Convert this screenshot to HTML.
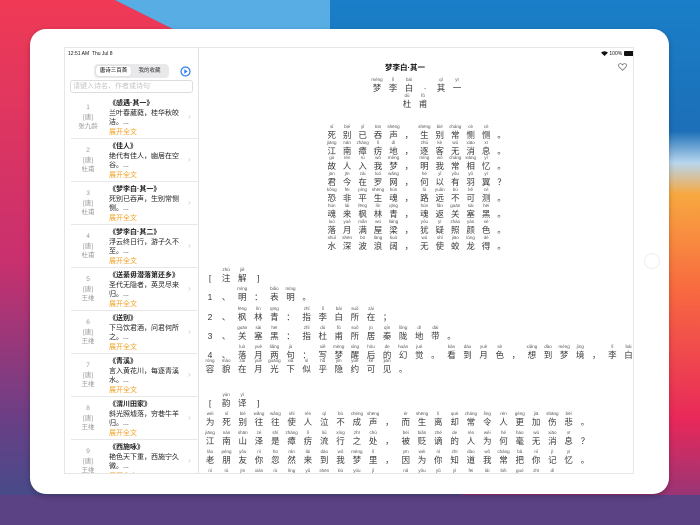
<!DOCTYPE html>
<html><head><meta charset="utf-8"><style>
*{margin:0;padding:0;box-sizing:border-box}
body{width:700px;height:525px;overflow:hidden;position:relative;font-family:"Liberation Sans","Noto Sans CJK SC",sans-serif;background:#6a3f86}
.bg{position:absolute;left:0;top:0}
.frame{position:absolute;left:30px;top:29px;width:639px;height:465px;background:#fff;border-radius:16px;box-shadow:0 2px 6px rgba(0,0,0,.25)}
.home{position:absolute;left:644px;top:253px;width:16px;height:16px;border-radius:50%;border:1px solid #eee}
.screen{position:absolute;left:64px;top:47px;width:570px;height:427px;background:#fff;border:1px solid #e6e6e6;overflow:hidden}
.a{position:absolute;white-space:nowrap}
.side{position:absolute;left:0;top:0;width:134px;height:427px;border-right:1px solid #e2e2e2}
.st{font-size:5px;color:#111}
.seg{position:absolute;left:29px;top:16px;width:75px;height:14px;background:#e9e9eb;border-radius:4px;font-size:5.5px}
.seg span{position:absolute;top:2px;height:10px;line-height:10px;text-align:center}
.search{position:absolute;left:5px;top:32px;width:123px;height:13px;border:1px solid #ddd;border-radius:3px;font-size:7px;color:#c4c4c4;line-height:12px;padding-left:2px}
.it{position:absolute;left:6px;width:128px;height:43px;border-bottom:1px solid #e8e8e8}
.it .n{position:absolute;left:0;width:34px;text-align:center;font-size:6.5px;color:#9a9a9a;line-height:9.5px;top:7px}
.it .t{position:absolute;left:38px;top:2px;font-size:7px;font-weight:bold;color:#222}
.it .x{position:absolute;left:38px;top:13px;width:76px;font-size:7px;line-height:9px;color:#222;white-space:normal}
.it .o{position:absolute;left:38px;top:31px;font-size:7px;color:#f0a020}
.it .c{position:absolute;left:117px;top:16px;font-size:8px;color:#c8c8c8}
.r{position:absolute;white-space:nowrap;font-size:0}
.r i{display:inline-block;font-style:normal;text-align:center;vertical-align:top;font-size:8.5px;line-height:11px;color:#3a3a3a}
.r i b{display:block;font-size:4.5px;line-height:6px;font-weight:normal;color:#555;height:6px}
.p i{width:15.45px}
.n1 i{width:16.1px}
.tr i{width:16.3px}
.s i{width:16px}
</style></head><body>
<svg class="bg" width="700" height="525" viewBox="0 0 700 525">
<defs>
<linearGradient id="g1" x1="0" y1="0" x2="0" y2="1"><stop offset="0" stop-color="#f03a55"/><stop offset=".5" stop-color="#c8306e"/><stop offset=".8" stop-color="#6a3f86"/><stop offset="1" stop-color="#3a4f8a"/></linearGradient>
<linearGradient id="g2" x1="0" y1="0" x2="0" y2="1"><stop offset="0" stop-color="#1a7fc8"/><stop offset=".25" stop-color="#1c6fb8"/><stop offset=".31" stop-color="#b8d6ee"/><stop offset=".37" stop-color="#f8a840"/><stop offset=".55" stop-color="#f86a40"/><stop offset=".8" stop-color="#e8285a"/><stop offset="1" stop-color="#7a3a80"/></linearGradient>
</defs>
<rect width="700" height="525" fill="url(#g1)"/>
<polygon points="115,0 700,0 700,525 480,525 175,30" fill="url(#g2)"/>
<rect x="0" y="495" width="700" height="30" fill="#5a4284"/>
<polygon points="115,0 330,0 330,30 175,30" fill="#58aee4"/>
</svg>
<div class="frame"></div>
<div class="home"></div>
<div class="screen">
 <div class="side">
  <div class="a st" style="left:3px;top:3px">12:51 AM&nbsp;&nbsp;Thu Jul 8</div>
  <div class="seg"><span style="left:2px;width:35px;background:#fff;border-radius:3px;box-shadow:0 0 1px rgba(0,0,0,.2)">唐诗三百首</span><span style="left:37px;width:37px;color:#333">我的收藏</span></div>
  <svg class="a" style="left:115px;top:18px" width="11" height="11" viewBox="0 0 11 11"><circle cx="5.5" cy="5.5" r="4.5" fill="none" stroke="#2a7ee8" stroke-width="1.2"/><path d="M4.3 3.3 L7.6 5.5 L4.3 7.7Z" fill="#2a7ee8"/></svg>
  <div class="search">请键入诗名、作者或诗句</div>
  <div class="it" style="top:48px"><div class="n">1<br>[唐]<br>张九龄</div><div class="t">《感遇·其一》</div><div class="x">兰叶春葳蕤，桂华秋皎洁。...</div><div class="o">展开全文</div><div class="c">›</div></div>
  <div class="it" style="top:91px"><div class="n">2<br>[唐]<br>杜甫</div><div class="t">《佳人》</div><div class="x">绝代有佳人，幽居在空谷。...</div><div class="o">展开全文</div><div class="c">›</div></div>
  <div class="it" style="top:134px"><div class="n">3<br>[唐]<br>杜甫</div><div class="t">《梦李白·其一》</div><div class="x">死别已吞声，生别常恻恻。...</div><div class="o">展开全文</div><div class="c">›</div></div>
  <div class="it" style="top:177px"><div class="n">4<br>[唐]<br>杜甫</div><div class="t">《梦李白·其二》</div><div class="x">浮云终日行，游子久不至。...</div><div class="o">展开全文</div><div class="c">›</div></div>
  <div class="it" style="top:220px"><div class="n">5<br>[唐]<br>王维</div><div class="t">《送綦毋潜落第还乡》</div><div class="x">圣代无隐者，英灵尽来归。...</div><div class="o">展开全文</div><div class="c">›</div></div>
  <div class="it" style="top:263px"><div class="n">6<br>[唐]<br>王维</div><div class="t">《送别》</div><div class="x">下马饮君酒，问君何所之。...</div><div class="o">展开全文</div><div class="c">›</div></div>
  <div class="it" style="top:306px"><div class="n">7<br>[唐]<br>王维</div><div class="t">《青溪》</div><div class="x">言入黄花川，每逐青溪水。...</div><div class="o">展开全文</div><div class="c">›</div></div>
  <div class="it" style="top:349px"><div class="n">8<br>[唐]<br>王维</div><div class="t">《渭川田家》</div><div class="x">斜光照墟落，穷巷牛羊归。...</div><div class="o">展开全文</div><div class="c">›</div></div>
  <div class="it" style="top:392px"><div class="n">9<br>[唐]<br>王维</div><div class="t">《西施咏》</div><div class="x">艳色天下重，西施宁久微。...</div><div class="o">展开全文</div><div class="c">›</div></div>
 </div>
 <div class="a st" style="left:536px;top:3px">
  <svg width="7" height="5" viewBox="0 0 7 5" style="vertical-align:middle"><path d="M0 1.6 Q3.5 -1 7 1.6 L3.5 5Z" fill="#111"/></svg> 100% <span style="display:inline-block;width:10px;height:4.5px;background:#111;border-radius:1px;vertical-align:middle"></span>
 </div>
 <div class="a" style="left:320px;top:14px;font-size:7.5px;font-weight:bold;color:#111">梦李白·其一</div>
 <svg class="a" style="left:553px;top:15px" width="9" height="8" viewBox="0 0 9 8"><path d="M4.5 7.3 L1 3.8 C-0.2 2.4 0.6 0.6 2.3 0.6 C3.4 0.6 4.1 1.3 4.5 2 C4.9 1.3 5.6 0.6 6.7 0.6 C8.4 0.6 9.2 2.4 8 3.8Z" fill="none" stroke="#777" stroke-width=".8"/></svg>

 <div class="r s" style="left:304px;top:29px"><i><b>mèng</b>梦</i><i><b>lǐ</b>李</i><i><b>bái</b>白</i><i><b></b>·</i><i><b>qí</b>其</i><i><b>yī</b>一</i></div>
 <div class="r s" style="left:334px;top:45px"><i><b>dù</b>杜</i><i><b>fǔ</b>甫</i></div>

 <div class="r p" style="left:259px;top:76px"><i><b>sǐ</b>死</i><i><b>bié</b>别</i><i><b>yǐ</b>已</i><i><b>tūn</b>吞</i><i><b>shēng</b>声</i><i><b></b>，</i><i><b>shēng</b>生</i><i><b>bié</b>别</i><i><b>cháng</b>常</i><i><b>cè</b>恻</i><i><b>cè</b>恻</i><i><b></b>。</i></div>
 <div class="r p" style="left:259px;top:92px"><i><b>jiāng</b>江</i><i><b>nán</b>南</i><i><b>zhàng</b>瘴</i><i><b>lì</b>疠</i><i><b>dì</b>地</i><i><b></b>，</i><i><b>zhú</b>逐</i><i><b>kè</b>客</i><i><b>wú</b>无</i><i><b>xiāo</b>消</i><i><b>xī</b>息</i><i><b></b>。</i></div>
 <div class="r p" style="left:259px;top:107px"><i><b>gù</b>故</i><i><b>rén</b>人</i><i><b>rù</b>入</i><i><b>wǒ</b>我</i><i><b>mèng</b>梦</i><i><b></b>，</i><i><b>míng</b>明</i><i><b>wǒ</b>我</i><i><b>cháng</b>常</i><i><b>xiāng</b>相</i><i><b>yì</b>忆</i><i><b></b>。</i></div>
 <div class="r p" style="left:259px;top:123px"><i><b>jūn</b>君</i><i><b>jīn</b>今</i><i><b>zài</b>在</i><i><b>luó</b>罗</i><i><b>wǎng</b>网</i><i><b></b>，</i><i><b>hé</b>何</i><i><b>yǐ</b>以</i><i><b>yǒu</b>有</i><i><b>yǔ</b>羽</i><i><b>yì</b>翼</i><i><b></b>？</i></div>
 <div class="r p" style="left:259px;top:139px"><i><b>kǒng</b>恐</i><i><b>fēi</b>非</i><i><b>píng</b>平</i><i><b>shēng</b>生</i><i><b>hún</b>魂</i><i><b></b>，</i><i><b>lù</b>路</i><i><b>yuǎn</b>远</i><i><b>bù</b>不</i><i><b>kě</b>可</i><i><b>cè</b>测</i><i><b></b>。</i></div>
 <div class="r p" style="left:259px;top:155px"><i><b>hún</b>魂</i><i><b>lái</b>来</i><i><b>fēng</b>枫</i><i><b>lín</b>林</i><i><b>qīng</b>青</i><i><b></b>，</i><i><b>hún</b>魂</i><i><b>fǎn</b>返</i><i><b>guān</b>关</i><i><b>sài</b>塞</i><i><b>hēi</b>黑</i><i><b></b>。</i></div>
 <div class="r p" style="left:259px;top:171px"><i><b>luò</b>落</i><i><b>yuè</b>月</i><i><b>mǎn</b>满</i><i><b>wū</b>屋</i><i><b>liáng</b>梁</i><i><b></b>，</i><i><b>yóu</b>犹</i><i><b>yí</b>疑</i><i><b>zhào</b>照</i><i><b>yán</b>颜</i><i><b>sè</b>色</i><i><b></b>。</i></div>
 <div class="r p" style="left:259px;top:187px"><i><b>shuǐ</b>水</i><i><b>shēn</b>深</i><i><b>bō</b>波</i><i><b>làng</b>浪</i><i><b>kuò</b>阔</i><i><b></b>，</i><i><b>wú</b>无</i><i><b>shǐ</b>使</i><i><b>jiāo</b>蛟</i><i><b>lóng</b>龙</i><i><b>dé</b>得</i><i><b></b>。</i></div>

 <div class="r n1" style="left:137px;top:219px"><i><b></b>[</i><i><b>zhù</b>注</i><i><b>jiě</b>解</i><i><b></b>]</i></div>
 <div class="r n1" style="left:137px;top:238px"><i><b></b>1</i><i><b></b>、</i><i><b>míng</b>明</i><i><b></b>：</i><i><b>biǎo</b>表</i><i><b>míng</b>明</i><i><b></b>。</i></div>
 <div class="r n1" style="left:137px;top:258px"><i><b></b>2</i><i><b></b>、</i><i><b>fēng</b>枫</i><i><b>lín</b>林</i><i><b>qīng</b>青</i><i><b></b>：</i><i><b>zhǐ</b>指</i><i><b>lǐ</b>李</i><i><b>bái</b>白</i><i><b>suǒ</b>所</i><i><b>zài</b>在</i><i><b></b>；</i></div>
 <div class="r n1" style="left:137px;top:277px"><i><b></b>3</i><i><b></b>、</i><i><b>guān</b>关</i><i><b>sài</b>塞</i><i><b>hēi</b>黑</i><i><b></b>：</i><i><b>zhǐ</b>指</i><i><b>dù</b>杜</i><i><b>fǔ</b>甫</i><i><b>suǒ</b>所</i><i><b>jū</b>居</i><i><b>qín</b>秦</i><i><b>lǒng</b>陇</i><i><b>dì</b>地</i><i><b>dài</b>带</i><i><b></b>。</i></div>
 <div class="r n1" style="left:137px;top:296px"><i><b></b>4</i><i><b></b>、</i><i><b>luò</b>落</i><i><b>yuè</b>月</i><i><b>liǎng</b>两</i><i><b>jù</b>句</i><i><b></b>：</i><i><b>xiě</b>写</i><i><b>mèng</b>梦</i><i><b>xǐng</b>醒</i><i><b>hòu</b>后</i><i><b>de</b>的</i><i><b>huàn</b>幻</i><i><b>jué</b>觉</i><i><b></b>。</i><i><b>kàn</b>看</i><i><b>dào</b>到</i><i><b>yuè</b>月</i><i><b>sè</b>色</i><i><b></b>，</i><i><b>xiǎng</b>想</i><i><b>dào</b>到</i><i><b>mèng</b>梦</i><i><b>jìng</b>境</i><i><b></b>，</i><i><b>lǐ</b>李</i><i><b>bái</b>白</i></div>
 <div class="r n1" style="left:137px;top:310px"><i><b>róng</b>容</i><i><b>mào</b>貌</i><i><b>zài</b>在</i><i><b>yuè</b>月</i><i><b>guāng</b>光</i><i><b>xià</b>下</i><i><b>sì</b>似</i><i><b>hū</b>乎</i><i><b>yǐn</b>隐</i><i><b>yuē</b>约</i><i><b>kě</b>可</i><i><b>jiàn</b>见</i><i><b></b>。</i></div>

 <div class="r n1" style="left:137px;top:344px"><i><b></b>[</i><i><b>yùn</b>韵</i><i><b>yì</b>译</i><i><b></b>]</i></div>
 <div class="r tr" style="left:137px;top:363px"><i><b>wèi</b>为</i><i><b>sǐ</b>死</i><i><b>bié</b>别</i><i><b>wǎng</b>往</i><i><b>wǎng</b>往</i><i><b>shǐ</b>使</i><i><b>rén</b>人</i><i><b>qì</b>泣</i><i><b>bù</b>不</i><i><b>chéng</b>成</i><i><b>shēng</b>声</i><i><b></b>，</i><i><b>ér</b>而</i><i><b>shēng</b>生</i><i><b>lí</b>离</i><i><b>què</b>却</i><i><b>cháng</b>常</i><i><b>lìng</b>令</i><i><b>rén</b>人</i><i><b>gèng</b>更</i><i><b>jiā</b>加</i><i><b>shāng</b>伤</i><i><b>bēi</b>悲</i><i><b></b>。</i></div>
 <div class="r tr" style="left:137px;top:382px"><i><b>jiāng</b>江</i><i><b>nán</b>南</i><i><b>shān</b>山</i><i><b>zé</b>泽</i><i><b>shì</b>是</i><i><b>zhàng</b>瘴</i><i><b>lì</b>疠</i><i><b>liú</b>流</i><i><b>xíng</b>行</i><i><b>zhī</b>之</i><i><b>chù</b>处</i><i><b></b>，</i><i><b>bèi</b>被</i><i><b>biǎn</b>贬</i><i><b>zhé</b>谪</i><i><b>de</b>的</i><i><b>rén</b>人</i><i><b>wèi</b>为</i><i><b>hé</b>何</i><i><b>háo</b>毫</i><i><b>wú</b>无</i><i><b>xiāo</b>消</i><i><b>xī</b>息</i><i><b></b>？</i></div>
 <div class="r tr" style="left:137px;top:401px"><i><b>lǎo</b>老</i><i><b>péng</b>朋</i><i><b>yǒu</b>友</i><i><b>nǐ</b>你</i><i><b>hū</b>忽</i><i><b>rán</b>然</i><i><b>lái</b>来</i><i><b>dào</b>到</i><i><b>wǒ</b>我</i><i><b>mèng</b>梦</i><i><b>lǐ</b>里</i><i><b></b>，</i><i><b>yīn</b>因</i><i><b>wèi</b>为</i><i><b>nǐ</b>你</i><i><b>zhī</b>知</i><i><b>dào</b>道</i><i><b>wǒ</b>我</i><i><b>cháng</b>常</i><i><b>bǎ</b>把</i><i><b>nǐ</b>你</i><i><b>jì</b>记</i><i><b>yì</b>忆</i><i><b></b>。</i></div>
 <div class="r tr" style="left:137px;top:420px"><i><b>nǐ</b>你</i><i><b>rú</b>如</i><i><b>jīn</b>今</i><i><b>xiàn</b>陷</i><i><b>rù</b>入</i><i><b>líng</b>囹</i><i><b>yǔ</b>圄</i><i><b>shēn</b>身</i><i><b>bù</b>不</i><i><b>yóu</b>由</i><i><b>jǐ</b>己</i><i><b></b>，</i><i><b>nǎ</b>哪</i><i><b>yǒu</b>有</i><i><b>yǔ</b>羽</i><i><b>yì</b>翼</i><i><b>fēi</b>飞</i><i><b>lái</b>来</i><i><b>běi</b>北</i><i><b>guó</b>国</i><i><b>zhī</b>之</i><i><b>dì</b>地</i></div>
</div>
</body></html>
